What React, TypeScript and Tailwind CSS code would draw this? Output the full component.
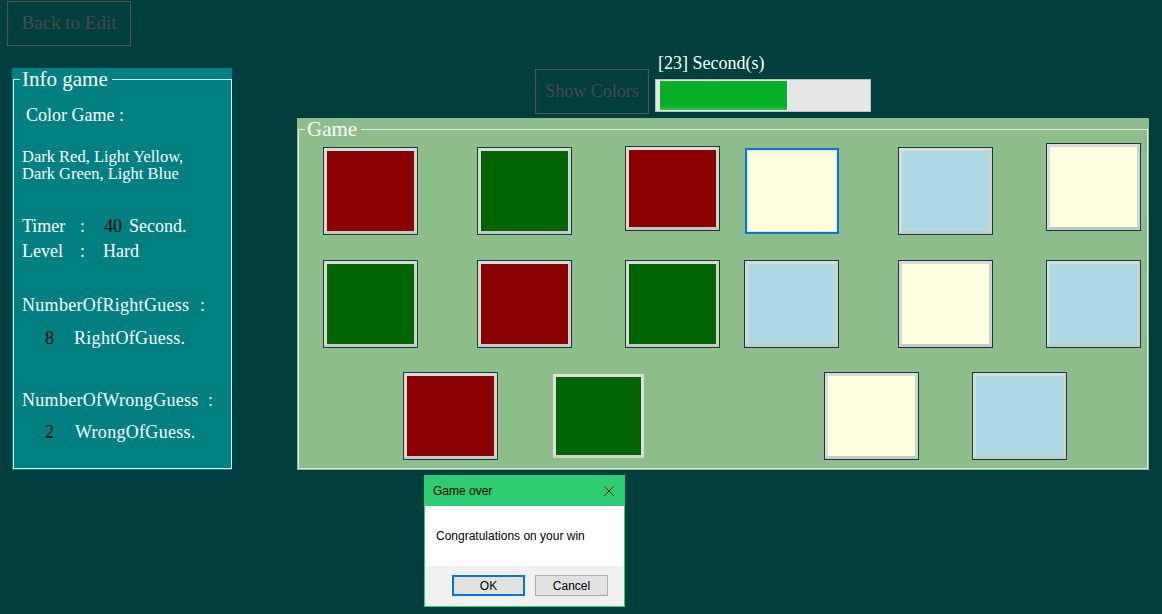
import React from 'react'

type Tint = 'red' | 'green' | 'yellow' | 'blue'

const fills: Record<Tint, string> = {
  red: 'bg-[#8b0000]',
  green: 'bg-[#006400]',
  yellow: 'bg-[#ffffe0]',
  blue: 'bg-[#add8e6]',
}

interface Kare {
  c: Tint
  cls: string
  v?: 'focus' | 'bare'
}

const satirlar: { cls: string; kareler: Kare[] }[] = [
  {
    cls: '',
    kareler: [
      { c: 'red', cls: 'ml-[24px] mt-[7px] w-[95px] h-[88px]' },
      { c: 'green', cls: 'ml-[59px] mt-[7px] w-[95px] h-[88px]' },
      { c: 'red', cls: 'ml-[53px] mt-[6px] w-[95px] h-[85px]' },
      { c: 'yellow', cls: 'ml-[25px] mt-[8px] w-[94px] h-[86px]', v: 'focus' },
      { c: 'blue', cls: 'ml-[59px] mt-[7px] w-[95px] h-[88px]' },
      { c: 'yellow', cls: 'ml-[53px] mt-[3px] w-[95px] h-[88px]' },
    ],
  },
  {
    cls: 'mt-[25px]',
    kareler: [
      { c: 'green', cls: 'ml-[24px] w-[95px] h-[88px]' },
      { c: 'red', cls: 'ml-[59px] w-[95px] h-[88px]' },
      { c: 'green', cls: 'ml-[53px] w-[95px] h-[88px]' },
      { c: 'blue', cls: 'ml-[24px] w-[95px] h-[88px]' },
      { c: 'yellow', cls: 'ml-[59px] w-[95px] h-[88px]' },
      { c: 'blue', cls: 'ml-[53px] w-[95px] h-[88px]' },
    ],
  },
  {
    cls: 'mt-[24px]',
    kareler: [
      { c: 'red', cls: 'ml-[104px] w-[95px] h-[88px]' },
      { c: 'green', cls: 'ml-[55px] mt-[2px] w-[91px] h-[84px]', v: 'bare' },
      { c: 'yellow', cls: 'ml-[180px] w-[95px] h-[88px]' },
      { c: 'blue', cls: 'ml-[53px] w-[95px] h-[88px]' },
    ],
  },
]

function Tile({ k }: { k: Kare }) {
  if (k.v === 'focus') {
    return (
      <div className={`${k.cls} shrink-0 border-2 border-[#0078d7]`}>
        <div className={`h-full border border-[#e4e4e4] ${fills[k.c]}`} />
      </div>
    )
  }
  if (k.v === 'bare') {
    return <div className={`${k.cls} shrink-0 border-[3px] border-[#dedede] border-b-[#d0d0d0] ${fills[k.c]}`} />
  }
  return (
    <div className={`${k.cls} shrink-0 border border-[#0d3d3d]`}>
      <div className={`h-full border-[3px] border-[#dadada] border-b-[#c6c6c6] border-r-[#d0d0d0] ${fills[k.c]}`} />
    </div>
  )
}

export default function App() {
  return (
    <div className="relative w-[1162px] h-[614px] overflow-hidden bg-[#013f3f] font-['Liberation_Serif',serif] text-white">
      <button className="ml-[7px] mt-[1px] block w-[124px] h-[45px] border border-[#545454] text-[19px] text-[#4a4a4a]">
        Back to Edit
      </button>

      <div className="flex items-start">
        {/* info panel */}
        <div className="ml-[12px] mt-[22px] w-[220px] h-[402px] shrink-0 bg-[#008080]">
          <fieldset className="ml-[1px] w-[219px] h-[401px] border border-[#d6f3f3] p-0">
            <legend className="ml-[6px] pl-[2px] pr-[4px] text-[21px] leading-[22px]">Info game</legend>
            <p className="mt-[17px] pl-[12px] text-[18px] leading-[17px]">Color Game :</p>
            <p className="mt-[24px] pl-[8px] text-[16.5px] leading-[17px]">
              Dark Red, Light Yellow,
              <br />
              Dark Green, Light Blue
            </p>
            <div className="mt-[35px] pl-[8px] flex text-[18px] leading-[18px]">
              <span className="w-[58px]">Timer</span>
              <span className="w-[24px]">:</span>
              <span className="w-[25px] text-black">40</span>
              <span>Second.</span>
            </div>
            <div className="mt-[7px] pl-[8px] flex text-[18px] leading-[18px]">
              <span className="w-[58px]">Level</span>
              <span className="w-[23px]">:</span>
              <span>Hard</span>
            </div>
            <div className="mt-[36px] pl-[8px] flex text-[18px] leading-[18px] tracking-[0.3px]">
              <span className="w-[178px]">NumberOfRightGuess</span>
              <span>:</span>
            </div>
            <div className="mt-[15px] pl-[31px] flex text-[18px] leading-[18px] tracking-[0.3px]">
              <span className="w-[29px] text-black">8</span>
              <span>RightOfGuess.</span>
            </div>
            <div className="mt-[44px] pl-[8px] flex text-[18px] leading-[18px] tracking-[0.3px]">
              <span className="w-[186px]">NumberOfWrongGuess</span>
              <span>:</span>
            </div>
            <div className="mt-[14px] pl-[31px] flex text-[18px] leading-[18px] tracking-[0.3px]">
              <span className="w-[30px] text-black">2</span>
              <span>WrongOfGuess.</span>
            </div>
          </fieldset>
        </div>

        {/* right side */}
        <div className="ml-[65px] w-[852px] shrink-0 flex flex-col">
          <div className="h-[72px] flex items-start">
            <button className="ml-[238px] mt-[23px] w-[114px] h-[45px] border border-[#545454] text-[18px] text-[#4a4a4a]">
              Show Colors
            </button>
            <div className="ml-[6px] flex flex-col">
              <span className="mt-[8px] pl-[3px] text-[18px] leading-[18px]">[23] Second(s)</span>
              <div className="mt-[7px] w-[216px] h-[33px] border border-[#bcbcbc] bg-[#e6e6e6]">
                <div className="ml-[4px] mt-[1px] w-[127px] h-[29px] bg-[linear-gradient(#06b025_85%,#2fbf48)]" />
              </div>
            </div>
          </div>

          <div className="h-[352px] bg-[#8fbc8b]">
            <fieldset className="ml-[1px] w-[850px] h-[351px] border border-[#e2e8e2] p-0">
              <legend className="ml-[6px] pl-[2px] pr-[4px] text-[21px] leading-[22px]">Game</legend>
              {satirlar.map((s, i) => (
                <div key={i} className={`flex items-start ${s.cls}`}>
                  {s.kareler.map((k, j) => (
                    <Tile key={j} k={k} />
                  ))}
                </div>
              ))}
            </fieldset>
          </div>
        </div>
      </div>

      {/* message box */}
      <div className="absolute left-[424px] top-[475px] w-[201px] h-[132px] border border-[#2ecc71] bg-[#f0f0f0] flex flex-col font-['Liberation_Sans',sans-serif] text-[12px] text-black">
        <div className="h-[30px] bg-[#2ecc71] flex items-center justify-between pl-[8px] pr-[9px]">
          <span>Game over</span>
          <svg width="12" height="12" viewBox="0 0 12 12" className="stroke-[#111]" strokeWidth="1">
            <path d="M1 1 L11 11 M11 1 L1 11" />
          </svg>
        </div>
        <div className="h-[60px] bg-white flex items-center pl-[11px]">Congratulations on your win</div>
        <div className="flex pl-[27px] pt-[9px] gap-[10px]">
          <button className="w-[73px] h-[21px] border-2 border-[#0078d7] bg-[#e1e1e1] leading-none">OK</button>
          <button className="w-[73px] h-[21px] border border-[#adadad] bg-[#e1e1e1] leading-none">Cancel</button>
        </div>
      </div>
    </div>
  )
}
